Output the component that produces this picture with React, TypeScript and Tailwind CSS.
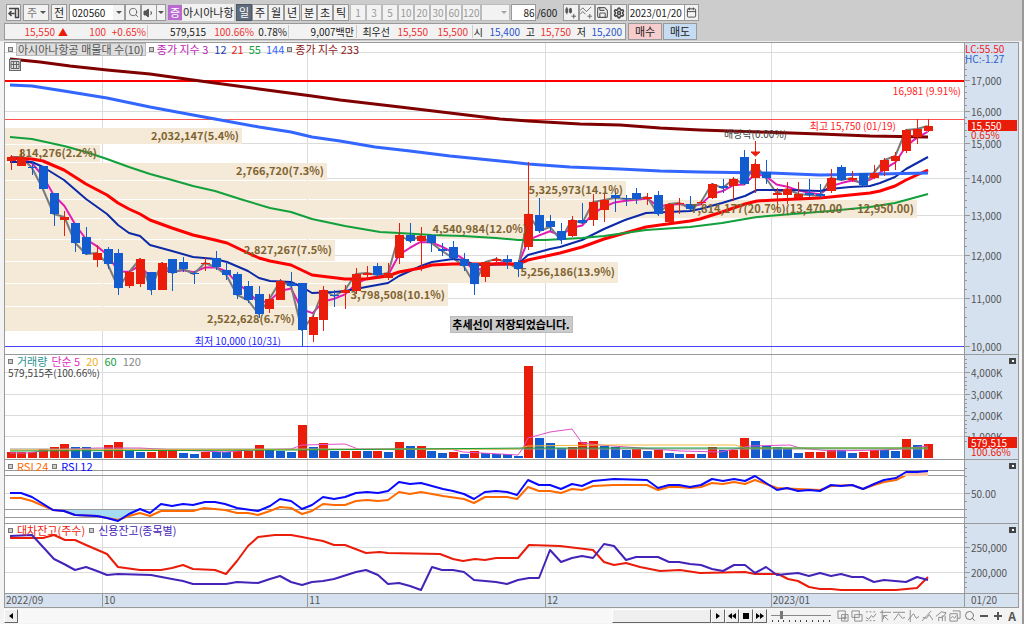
import { useState } from "react";
import type { ReactNode } from "react";
import {
  Calendar,
  Save,
  Search,
  Settings,
  Volume1,
} from "lucide-react";

/**
 * Weekly stock chart: quote toolbar, price candles with moving averages and a
 * volume profile, then volume, RSI and balance panels above a date axis.
 */

const UP = "#ea1c0a";
const DOWN = "#125cd0";
const PLOT_LEFT = 5;
const PLOT_WIDTH = 959;
const MONTHS = [102.5, 307.5, 545.5, 771.5];

type Point = [number, number];

// high, body top, body bottom, low; falling candles are listed in FALLING
const CANDLES = [
  [155, 157, 161, 170], [149, 157, 166, 166], [162, 167, 168, 175], [166, 166, 189, 189],
  [193, 193, 214, 226], [211, 217, 220, 236], [223, 223, 243, 252], [227, 237, 254, 255],
  [245, 253, 260, 267], [247, 249, 264, 269], [249, 253, 288, 295], [271, 272, 286, 288],
  [258, 259, 284, 287], [272, 272, 290, 295], [262, 263, 290, 290], [259, 259, 273, 291],
  [257, 262, 269, 272], [271, 273, 274, 284], [258, 263, 264, 271], [251, 258, 267, 270],
  [262, 270, 275, 280], [272, 274, 295, 299], [281, 286, 300, 303], [286, 294, 314, 318],
  [294, 299, 309, 313], [279, 281, 300, 300], [272, 283, 286, 288], [283, 283, 330, 347],
  [315, 317, 335, 342], [286, 290, 320, 331], [290, 295, 296, 307], [285, 290, 293, 309],
  [268, 274, 291, 294], [266, 273, 275, 277], [263, 266, 275, 277], [263, 273, 278, 280],
  [223, 235, 258, 264], [223, 235, 241, 243], [227, 236, 241, 271], [235, 235, 243, 252],
  [243, 249, 251, 256], [241, 247, 258, 260], [253, 259, 266, 271], [263, 263, 284, 295],
  [262, 262, 277, 282], [257, 259, 261, 264], [255, 259, 262, 269], [260, 262, 269, 277],
  [162, 214, 247, 250], [198, 215, 231, 233], [215, 221, 227, 231], [223, 231, 240, 244],
  [216, 220, 236, 237], [203, 220, 223, 224], [194, 202, 220, 226], [194, 200, 210, 222],
  [190, 195, 198, 212], [195, 198, 199, 206], [188, 193, 199, 204], [193, 197, 199, 205],
  [191, 195, 214, 216], [203, 204, 222, 223], [198, 203, 204, 214], [196, 204, 209, 210],
  [200, 202, 203, 205], [183, 184, 198, 199], [179, 186, 188, 193], [177, 179, 186, 201],
  [150, 157, 184, 185], [159, 164, 178, 193], [160, 172, 178, 184], [188, 193, 195, 212],
  [182, 189, 195, 204], [182, 194, 198, 199], [179, 193, 195, 197], [184, 194, 196, 198],
  [169, 178, 191, 193], [165, 167, 180, 181], [171, 178, 180, 182], [173, 173, 185, 187],
  [165, 173, 178, 179], [158, 160, 171, 176], [152, 156, 161, 170], [129, 130, 151, 153],
  [119, 129, 137, 144], [119, 126, 131, 132],
];

const FALLING = new Set([
  2, 3, 4, 6, 7, 9, 10, 13, 15, 16, 17, 19, 20, 21, 22, 23, 26, 27, 30, 34, 37, 39, 40, 41,
  42, 43, 46, 47, 49, 50, 51, 53, 56, 57, 58, 60, 63, 66, 68, 70, 74, 75, 77, 79,
]);

// bar heights, negative where volume fell
const VOLUMES = [
  6, 6, 6, 9, 11, 14, -11, -11, -6, 13, 16, -7, -6, 6, 9, 9, -5, -4, 6, -6, -6, 7, 7, 13, -9,
  -7, -6, 33, -11, 15, -7, 7, 7, -7, 7, -6, 16, -12, 12, -7, -5, 6, -4, 7, -5, -4, -4, -2, 92,
  -20, -15, -10, 11, 16, 17, -12, -11, -8, 9, -7, 8, -5, -4, 4, -4, 11, -8, 8, 20, -17, -12,
  -11, -10, -5, 6, 6, 8, -8, -5, 6, 8, -8, -7, 19, -13, 14,
];

const EMA12: Point[] = [[10, 162], [32, 162], [43, 167], [64, 180], [86, 199], [107, 214], [118, 225], [129, 233], [140, 236], [150, 245], [172, 251], [193, 257], [215, 259], [227, 262], [248, 271], [259, 278], [270, 281], [291, 282], [302, 287], [312, 293], [334, 292], [345, 291], [366, 287], [388, 283], [399, 276], [410, 271], [421, 266], [432, 262], [453, 259], [463, 260], [475, 265], [518, 264], [528, 255], [550, 249], [560, 247], [582, 240], [604, 229], [625, 220], [646, 213], [668, 212], [690, 211], [700, 209], [722, 203], [745, 196], [757, 190], [790, 190], [820, 191], [830, 189], [850, 187], [870, 186], [880, 183], [895, 177], [906, 169], [928, 157]];
const EMA21: Point[] = [[10, 158], [32, 159], [43, 161], [64, 170], [86, 184], [107, 195], [118, 203], [129, 209], [140, 214], [150, 220], [172, 228], [193, 235], [215, 240], [227, 243], [248, 253], [259, 258], [270, 261], [291, 265], [312, 275], [345, 279], [366, 279], [388, 276], [399, 272], [421, 268], [432, 265], [453, 264], [518, 264], [528, 260], [560, 253], [582, 247], [604, 239], [625, 233], [646, 227], [660, 225], [690, 221], [700, 219], [722, 212], [745, 204], [757, 201], [775, 200], [820, 198], [840, 196], [870, 193], [880, 191], [895, 186], [906, 180], [928, 170]];
const EMA55: Point[] = [[10, 137], [32, 139], [64, 146], [86, 152], [107, 159], [129, 167], [150, 174], [172, 180], [193, 186], [215, 191], [240, 199], [270, 208], [291, 212], [312, 219], [345, 226], [380, 232], [399, 233], [432, 235], [463, 236], [496, 238], [518, 240], [545, 240], [582, 238], [604, 236], [625, 233], [646, 230], [690, 227], [722, 223], [757, 217], [780, 215], [830, 211], [870, 207], [895, 203], [928, 194]];
const EMA144: Point[] = [[10, 85], [32, 86], [64, 91], [107, 98], [150, 107], [193, 115], [215, 119], [259, 127], [291, 132], [312, 137], [340, 141], [375, 147], [410, 151], [450, 156], [500, 161], [528, 164], [570, 167], [620, 169], [660, 171], [700, 172], [770, 173], [820, 175], [880, 174], [928, 173]];
const EMA233: Point[] = [[10, 59], [40, 62], [70, 66], [107, 70], [150, 74], [193, 80], [215, 83], [259, 89], [312, 96], [340, 100], [400, 107], [450, 113], [500, 119], [528, 121], [580, 124], [620, 125], [660, 128], [700, 130], [760, 132], [820, 134], [870, 136], [928, 137]];

const VOL5: Point[] = [[10, 453], [27, 453], [50, 450], [97, 448], [140, 448], [178, 450], [225, 452], [250, 450], [291, 449], [302, 445], [345, 444], [358, 449], [400, 449], [450, 449], [463, 452], [518, 455], [523, 448], [528, 438], [550, 432], [572, 429], [582, 443], [600, 445], [640, 448], [680, 451], [720, 452], [735, 449], [750, 446], [790, 445], [800, 448], [830, 451], [880, 450], [900, 449], [928, 446]];
const VOL20: Point[] = [[10, 450], [518, 449], [528, 446], [600, 445], [735, 445], [745, 448], [928, 448]];
const VOL60: Point[] = [[10, 451], [300, 450], [528, 448], [928, 448]];
const VOL120: Point[] = [[10, 449], [928, 449]];

const RSI12: Point[] = [[10, 493], [21, 493], [32, 497], [53, 510], [64, 511], [75, 515], [97, 516], [107, 518], [118, 521], [129, 514], [140, 509], [150, 513], [161, 504], [172, 506], [183, 504], [193, 505], [205, 502], [215, 502], [225, 504], [237, 508], [258, 511], [270, 506], [280, 499], [291, 501], [302, 509], [312, 505], [323, 497], [334, 499], [345, 497], [356, 493], [367, 492], [378, 493], [388, 491], [399, 482], [410, 484], [421, 483], [432, 486], [443, 489], [453, 491], [464, 494], [474, 499], [485, 492], [496, 491], [507, 492], [517, 495], [528, 480], [539, 485], [550, 485], [561, 489], [572, 484], [582, 486], [593, 481], [614, 479], [647, 480], [658, 488], [669, 485], [679, 485], [690, 487], [701, 485], [712, 479], [723, 481], [734, 479], [745, 481], [755, 476], [766, 483], [777, 490], [787, 488], [798, 491], [809, 490], [820, 491], [831, 485], [841, 486], [852, 485], [863, 489], [874, 484], [884, 480], [896, 478], [906, 472], [917, 472], [928, 471]];
const RSI24: Point[] = [[10, 498], [21, 498], [32, 501], [53, 510], [64, 511], [75, 515], [97, 516], [107, 518], [118, 520], [129, 516], [140, 513], [150, 516], [161, 511], [193, 511], [204, 508], [225, 510], [237, 513], [248, 513], [258, 515], [270, 511], [280, 507], [291, 508], [302, 514], [312, 511], [323, 504], [334, 505], [345, 505], [356, 501], [367, 500], [378, 501], [388, 500], [399, 492], [410, 494], [421, 492], [443, 496], [464, 499], [474, 503], [485, 497], [507, 497], [517, 499], [528, 487], [539, 491], [550, 491], [561, 493], [572, 489], [582, 490], [593, 486], [614, 485], [647, 485], [658, 490], [669, 487], [679, 487], [690, 488], [701, 487], [712, 483], [723, 484], [734, 482], [745, 484], [755, 480], [766, 484], [777, 488], [798, 489], [820, 490], [831, 486], [852, 485], [863, 489], [874, 485], [884, 482], [896, 480], [906, 475], [928, 475]];

const LENDING: Point[] = [[10, 538], [43, 538], [54, 535], [65, 540], [75, 540], [86, 545], [107, 554], [118, 567], [140, 570], [161, 570], [172, 568], [183, 565], [193, 569], [215, 570], [226, 574], [237, 561], [248, 546], [258, 537], [275, 535], [291, 535], [302, 537], [312, 539], [323, 541], [334, 545], [345, 545], [366, 553], [380, 552], [388, 553], [440, 554], [453, 559], [463, 561], [475, 559], [485, 560], [496, 558], [518, 558], [529, 545], [560, 546], [593, 550], [604, 562], [614, 565], [626, 563], [640, 567], [660, 571], [680, 570], [700, 573], [745, 572], [755, 574], [778, 574], [788, 579], [798, 581], [809, 587], [820, 589], [831, 589], [841, 590], [896, 590], [917, 588], [928, 577]];
const CREDIT: Point[] = [[10, 536], [32, 535], [43, 547], [54, 559], [64, 564], [75, 570], [86, 567], [97, 571], [107, 575], [118, 574], [151, 575], [172, 579], [183, 581], [193, 584], [226, 584], [237, 582], [258, 583], [270, 579], [280, 576], [291, 582], [302, 585], [312, 582], [323, 581], [334, 579], [356, 572], [366, 570], [378, 575], [388, 584], [399, 583], [410, 586], [421, 590], [432, 567], [442, 570], [453, 570], [464, 572], [474, 580], [496, 582], [507, 584], [518, 580], [529, 578], [539, 578], [550, 550], [561, 562], [572, 558], [582, 556], [593, 558], [604, 544], [614, 546], [626, 560], [636, 557], [658, 557], [669, 562], [679, 562], [690, 564], [701, 565], [712, 569], [723, 571], [734, 565], [745, 565], [755, 573], [766, 567], [777, 575], [787, 574], [798, 573], [809, 576], [820, 573], [831, 576], [841, 574], [852, 577], [863, 577], [874, 582], [884, 580], [906, 582], [917, 577], [928, 580]];

// volume profile: top, bottom, right edge, label
const PROFILE: [number, number, number, string][] = [
  [128, 144, 242, "2,032,147(5.4%)"],
  [145, 162, 100, "814,276(2.2%)"],
  [163, 180, 327, "2,766,720(7.3%)"],
  [181, 199, 626, "5,325,973(14.1%)"],
  [200, 218, 917, "7,814,177(20.7%)(13,470.00 — 12,950.00)"],
  [219, 239, 530, "4,540,984(12.0%)"],
  [240, 261, 335, "2,827,267(7.5%)"],
  [262, 283, 618, "5,256,186(13.9%)"],
  [284, 306, 448, "3,798,508(10.1%)"],
  [307, 331, 298, "2,522,628(6.7%)"],
];

const PERIODS = ["주", "월", "년"];
const UNITS = ["분", "초", "틱"];
const MINUTES = ["1", "3", "5", "10", "20", "30", "60", "120"];
const PRICES = [10000, 11000, 12000, 13000, 14000, 15000, 16000, 17000];

const candleX = (i: number) => 10.5 + i * 10.79;
const priceY = (p: number) => 346.5 - 500.4 * Math.log(p / 10000);
const pct = (x: number) => `${((x - PLOT_LEFT) / PLOT_WIDTH) * 100}%`;
const toPoints = (pts: Point[]) => pts.map((p) => p.join(",")).join(" ");

const closes: Point[] = CANDLES.map((c, i) => [candleX(i), FALLING.has(i) ? c[2] : c[1]]);

function ema3(): Point[] {
  let prev = 163;
  return closes.map(([x, y]) => {
    prev += (y - prev) / 2;
    return [x, prev];
  });
}

function Line({ pts, color, width }: { pts: Point[]; color: string; width: number }) {
  return (
    <polyline points={toPoints(pts)} fill="none" stroke={color} strokeWidth={width} strokeLinejoin="round" />
  );
}

function Plot({ top, height, rows, children }: { top: number; height: number; rows: number[]; children: ReactNode }) {
  return (
    <svg
      viewBox={`${PLOT_LEFT} ${top} ${PLOT_WIDTH} ${height}`}
      preserveAspectRatio="none"
      className="block h-full w-full"
      aria-hidden="true"
    >
      <g stroke="#dcdcdc" strokeWidth="1" shapeRendering="crispEdges">
        {rows.map((y) => (
          <line key={y} x1="5" x2="964" y1={y} y2={y} />
        ))}
        {MONTHS.map((x) => (
          <line key={x} x1={x} x2={x} y1={top} y2={top + height} />
        ))}
      </g>
      {children}
    </svg>
  );
}

function Axis({ top, height, ticks, labels, children }: {
  top: number;
  height: number;
  ticks: number[];
  labels: [number, string][];
  children?: ReactNode;
}) {
  return (
    <div className="relative w-[55px] shrink-0 overflow-hidden border-x border-[#9a9a9a] bg-[#d6e1ef] text-[10px] text-[#555]">
      <svg viewBox={`0 ${top} 53 ${height}`} className="block h-full w-full" shapeRendering="crispEdges" aria-hidden="true">
        {ticks.map((y) => (
          <line key={y} x1="0" x2="2" y1={y} y2={y} stroke="#999" />
        ))}
        {labels.map(([y]) => (
          <line key={y} x1="0" x2="5" y1={y} y2={y} stroke="#999" />
        ))}
      </svg>
      {labels.map(([y, text]) => (
        <span key={text} className="absolute left-[6px] -translate-y-1/2" style={{ top: Math.floor(y - top) }}>
          {text}
        </span>
      ))}
      {children}
    </div>
  );
}

function CloseBox() {
  return (
    <button aria-label="패널 닫기" className="absolute top-[3px] right-[2px] flex h-[6px] w-[7px] items-center justify-center bg-[#444]">
      <span className="size-[2px] bg-white" />
    </button>
  );
}

function Dot() {
  return <span className="size-[5px] shrink-0 border border-[#777] bg-[#ccc]" />;
}

function ToolButton({ children, label, size = "w-[16px]", tone = "border-[#999] bg-[#f2f2f2]" }: {
  children: ReactNode;
  label?: string;
  size?: string;
  tone?: string;
}) {
  return (
    <button aria-label={label} className={`flex h-[17px] shrink-0 items-center justify-center border ${size} ${tone}`}>
      {children}
    </button>
  );
}

function Caret() {
  return <span className="border-x-[3px] border-t-[3px] border-x-transparent border-t-[#555]" />;
}

function MainToolbar() {
  const [code, setCode] = useState("020560");
  const [count, setCount] = useState("86");
  return (
    <div className="flex h-[17px] items-center pl-[2px]">
      <ToolButton label="창 고정" size="w-[15px]">
        <svg viewBox="0 0 12 12" className="size-3" fill="none" stroke="#444" aria-hidden="true">
          <path d="M1 1.500h10M7.500 2v8.500h3V2M6.500 6.500H1M3.500 4L1 6.500 3.500 9" strokeWidth="1.5" />
        </svg>
      </ToolButton>
      <div className="relative ml-[2px] flex">
        <select aria-label="종목 구분" className="h-[17px] w-[26px] appearance-none border border-[#999] bg-[#f2f2f2] pl-[3px] text-[#777]">
          <option>주</option>
        </select>
        <span className="pointer-events-none absolute top-[7px] right-[3px] flex"><Caret /></span>
      </div>
      <span className="w-[2px]" />
      <ToolButton>전</ToolButton>
      <input
        aria-label="종목 코드"
        value={code}
        onChange={(e) => setCode(e.target.value)}
        className="ml-[2px] h-[17px] w-[44px] border border-r-0 border-[#999] bg-white pl-[2px] text-[10px]"
      />
      <ToolButton label="종목 목록" size="w-[12px] border-l-0"><Caret /></ToolButton>
      <ToolButton label="종목 검색"><Search size={11} color="#666" /></ToolButton>
      <ToolButton label="소리"><Volume1 size={12} color="#555" fill="#555" /></ToolButton>
      <ToolButton label="소리 설정" size="w-[9px] border-l-0"><Caret /></ToolButton>
      <span className="ml-[2px] flex h-[15px] w-[14px] items-center justify-center bg-[#b86ad0] text-white">증</span>
      <span className="h-[17px] w-[52px] bg-[#f2f2f2] pl-px leading-[17px] whitespace-nowrap">아시아나항</span>
      <span className="w-[2px]" />
      <ToolButton tone="border-[#4b5866] bg-[#5d6b7a] text-white">일</ToolButton>
      {PERIODS.map((p) => <ToolButton key={p}>{p}</ToolButton>)}
      <span className="w-px" />
      {UNITS.map((u) => <ToolButton key={u}>{u}</ToolButton>)}
      <span className="w-px" />
      {MINUTES.map((m) => (
        <ToolButton key={m} size="min-w-[16px] text-[10px]" tone="border-[#bbb] bg-[#f2f2f2] text-[#999]">{m}</ToolButton>
      ))}
      <div className="relative flex">
        <select aria-label="사용자 주기" className="h-[17px] w-[29px] appearance-none border border-[#bbb] bg-[#f2f2f2]">
          <option></option>
        </select>
        <span className="pointer-events-none absolute top-[7px] right-[3px] flex opacity-50"><Caret /></span>
      </div>
      <input
        aria-label="봉 개수"
        value={count}
        onChange={(e) => setCount(e.target.value)}
        className="ml-px h-[17px] w-[25px] border border-[#999] bg-white text-right text-[10px]"
      />
      <span className="w-[27px] pl-px text-[10px]">/600</span>
      <ToolButton label="종목 추가">
        <svg viewBox="0 0 14 14" className="size-[13px]" stroke="#555" fill="#555" aria-hidden="true">
          <path d="M3 1v8M7 2v6M8 11h5M10.500 8.500v5" fill="none" />
          <path d="M2 3h2v4H2zM6 3h2v4H6z" />
        </svg>
      </ToolButton>
      <ToolButton label="지표 추가">
        <svg viewBox="0 0 14 14" className="size-[13px]" stroke="#666" fill="none" aria-hidden="true">
          <path d="M0 5l3-3 4 4 5-5M0 9l3-3 3 3M8 11h5M10.500 8.500v5" />
        </svg>
      </ToolButton>
      <ToolButton label="저장"><Save size={13} color="#555" /></ToolButton>
      <ToolButton label="설정"><Settings size={12} color="#444" strokeWidth={3} /></ToolButton>
      <input aria-label="기준일" defaultValue="2023/01/20" className="ml-px h-[17px] w-[56px] border border-r-0 border-[#999] bg-white pl-px text-[10px]" />
      <ToolButton label="달력" size="w-[15px]"><Calendar size={11} color="#444" /></ToolButton>
    </div>
  );
}

function QuoteBar() {
  return (
    <div className="mt-[2px] flex h-[17px] items-stretch">
      <div className="flex items-center border border-[#999] bg-[#f2f2f2] text-right text-[10px] whitespace-nowrap text-[#222]">
        <span className="w-[50px] text-[#e33]">15,550</span>
        <span className="w-[13px] text-[#ea1c0a]">▲</span>
        <span className="w-[38px] text-[#e33]">100</span>
        <span className="w-[42px] border-r border-[#ccc] pr-px text-[#e33]">+0.65%</span>
        <span className="w-[58px]">579,515</span>
        <span className="w-[48px] text-[#e33]">100.66%</span>
        <span className="w-[35px] border-r border-[#ccc] pr-px">0.78%</span>
        <span className="w-[68px] border-r border-[#ccc] pr-[2px]">9,007백만</span>
        <span className="w-[33px]">최우선</span>
        <span className="w-[38px] text-[#e33]">15,550</span>
        <span className="w-[45px] border-r border-[#ccc] pr-1 text-[#e33]">15,500</span>
        <span className="w-[10px]">시</span>
        <span className="w-[37px] text-[#2a55cc]">15,400</span>
        <span className="w-[15px]">고</span>
        <span className="w-[36px] text-[#e33]">15,750</span>
        <span className="w-[15px]">저</span>
        <span className="w-[39px] pr-[3px] text-[#2a55cc]">15,200</span>
      </div>
      <span className="w-[2px]" />
      <ToolButton size="w-[34px]" tone="border-[#999] bg-[#f6cccc]">매수</ToolButton>
      <span className="w-px" />
      <ToolButton size="w-[34px]" tone="border-[#999] bg-[#c5dcf2]">매도</ToolButton>
    </div>
  );
}

function PricePanel() {
  const minor: number[] = [];
  for (let p = 10200; p < 18000; p += 200) if (p % 1000) minor.push(priceY(p));
  return (
    <section className="flex h-[312px] border-t border-[#999]">
      <div className="relative min-w-0 flex-1 border-l border-[#999]">
        <Plot top={43} height={311} rows={[...PRICES, 18000].map((p) => Math.floor(priceY(p)) + 0.5)}>
          <g fill="#f5e9d7">
            {PROFILE.map(([t, b, right]) => (
              <rect key={t} x="5" y={t} width={right - 5} height={b - t} />
            ))}
          </g>
          <g fill="none">
            <path d="M5 81h959" stroke="#ff0000" strokeWidth="2" />
            <path d="M5 119.500h959" stroke="#ff5050" />
            <path d="M5 346.500h959" stroke="#4444ff" />
          </g>
          <Line pts={ema3()} color="#e01cb4" width={2} />
          <Line pts={closes} color="#7a7a7a" width={2} />
          <Line pts={EMA12} color="#0c2aa8" width={2} />
          <Line pts={EMA21} color="#ff0000" width={3} />
          <Line pts={EMA55} color="#12a03c" width={2} />
          <Line pts={EMA144} color="#3366ff" width={3} />
          <Line pts={EMA233} color="#800000" width={3} />
          <g shapeRendering="crispEdges">
            {CANDLES.map(([high, top, bottom, low], i) => {
              const color = FALLING.has(i) ? DOWN : UP;
              const x = Math.round(candleX(i));
              return (
                <g key={i} fill={color}>
                  <rect x={x} y={high} width="1" height={low - high} />
                  <rect x={x - 4} y={top} width="9" height={Math.max(1, bottom - top)} />
                </g>
              );
            })}
          </g>
          <path d="M755.500 141v11M751 152h9l-4.500 4z" stroke={UP} fill={UP} />
        </Plot>

        {PROFILE.map(([t, b, right, text]) => (
          <span
            key={text}
            className="absolute -translate-x-full -translate-y-1/2 pr-[3px] font-bold whitespace-nowrap text-[#7f6430]"
            style={{ left: pct(right), top: Math.floor((t + b) / 2) - 44 }}
          >
            {text}
          </span>
        ))}
        <div className="text-[10px] whitespace-nowrap">
          <span className="absolute top-[47px] right-[3px] -translate-y-1/2 text-[#ff2020]">16,981 (9.91%)</span>
          <span className="absolute top-[82px] -translate-x-full -translate-y-1/2 text-[#ff2020]" style={{ left: pct(896) }}>
            최고 15,750 (01/19)
          </span>
          <span className="absolute top-[90px] -translate-x-full -translate-y-1/2 text-[#444]" style={{ left: pct(787) }}>
            배당락(0.00%)
          </span>
          <span className="absolute top-[297px] -translate-x-full -translate-y-1/2 text-[#2222ff]" style={{ left: pct(281) }}>
            최저 10,000 (10/31)
          </span>
        </div>
        <p className="absolute top-[273px] left-1/2 flex h-[17px] w-[123px] -translate-x-[35px] items-center justify-center border border-[#bbb] bg-[#cbcbcb] font-bold whitespace-nowrap text-black">
          추세선이 저장되었습니다.
        </p>

        <div className="absolute top-0 left-[3px] flex h-[13px] items-center gap-[3px] whitespace-nowrap text-[#c01cb4]">
          <Dot />
          <button className="h-[13px] border border-[#bbb] bg-[#dedede] px-px leading-[11px] text-[#555]">
            아시아나항공 매물대 수(10)
          </button>
          <Dot />
          <span>종가 지수 3</span>
          <span className="ml-[3px] text-[#2238b8]">12</span>
          <span className="ml-[2px] text-[#f02020]">21</span>
          <span className="ml-[2px] text-[#12a03c]">55</span>
          <span className="ml-[2px] text-[#3366ff]">144</span>
          <Dot />
          <span className="text-[#8c1414]">종가 지수 233</span>
        </div>
        <button aria-label="표 보기" className="absolute top-[16px] left-[4px] border border-[#666] bg-[#ddd]">
          <svg viewBox="0 0 10 10" className="size-[10px]" fill="none" stroke="#666" aria-hidden="true">
            <path d="M1 1.500h8v7H1zM1 4.500h8M3.500 1v8M6.500 1v8" />
          </svg>
        </button>
      </div>
      <Axis
        top={43}
        height={311}
        ticks={minor}
        labels={PRICES.map((p) => [Math.floor(priceY(p)) + 0.5, p.toLocaleString("en-US")])}
      >
        <span className="absolute top-px left-0 leading-[10px] text-[#f02020]">LC:55.50</span>
        <span className="absolute top-[11px] left-0 leading-[10px] text-[#2a62cc]">HC:-1.27</span>
        <span className="absolute top-[77px] right-px left-[3px] h-[11px] bg-[#ea1c0a] pl-[3px] leading-[11px] text-white">15,550</span>
        <span className="absolute top-[87px] left-[6px] leading-[10px] text-[#ea1c0a]">0.65%</span>
      </Axis>
    </section>
  );
}

function VolumePanel() {
  return (
    <section className="flex h-[105px] border-t border-[#999]">
      <div className="relative min-w-0 flex-1 border-l border-[#999]">
        <Plot top={355} height={104} rows={[372.5, 394.5, 415.5, 436.5]}>
          <g shapeRendering="crispEdges">
            {VOLUMES.map((v, i) => (
              <rect
                key={i}
                x={Math.round(candleX(i)) - 4}
                y={458 - Math.abs(v)}
                width="9"
                height={Math.abs(v)}
                fill={v < 0 ? DOWN : UP}
              />
            ))}
          </g>
          <Line pts={VOL5} color="#e050c8" width={1} />
          <Line pts={VOL120} color="#999" width={1} />
          <Line pts={VOL20} color="#f0b838" width={1} />
          <Line pts={VOL60} color="#12a03c" width={1} />
        </Plot>
        <div className="absolute top-0 left-[3px] flex h-[13px] items-center gap-1 text-[#e030c0]">
          <Dot />
          <span className="text-[#2a9090]">거래량</span>
          <span>단순 5</span>
          <span className="ml-[2px] text-[#f0b020]">20</span>
          <span className="ml-[2px] text-[#12a03c]">60</span>
          <span className="ml-[2px] text-[#888]">120</span>
        </div>
        <span className="absolute top-[11px] left-[3px] text-[10px] text-[#444]">579,515주(100.66%)</span>
      </div>
      <Axis
        top={355}
        height={104}
        ticks={[359.5, 363.5, 367.5, 377.5, 381.5, 385.5, 389.5, 399.5, 403.5, 407.5, 411.5, 420.5, 424.5, 428.5, 432.5, 441.5]}
        labels={[[372.5, "4,000K"], [394.5, "3,000K"], [415.5, "2,000K"], [436.5, "1,000K"]]}
      >
        <span className="absolute top-[82px] right-px left-[3px] h-[11px] bg-[#ea1c0a] pl-[3px] leading-[11px] text-white">579,515</span>
        <span className="absolute top-[92px] left-[6px] leading-[10px] text-[#ea1c0a]">100.66%</span>
        <CloseBox />
      </Axis>
    </section>
  );
}

function RsiPanel() {
  return (
    <section className="flex h-[64px] border-t border-[#999]">
      <div className="relative min-w-0 flex-1 border-l border-[#999]">
        <Plot top={460} height={63} rows={[493.5]}>
          <path d="M5 470.500h959M5 475.500h959M5 509.500h959M5 517.500h959" stroke="#999" shapeRendering="crispEdges" />
          <path d="M53 510H139L129 514 118 521 107 518 97 516 75 515 64 511z" fill="#a5dcf2" />
          <Line pts={RSI24} color="#ff6a00" width={2} />
          <path d="M902 476l4-4h22v4z" fill="#f8c8a8" />
          <Line pts={RSI12} color="#0a0aff" width={2} />
        </Plot>
        <div className="absolute top-0 left-[3px] flex h-[13px] items-center gap-1">
          <Dot />
          <span className="text-[#ff6a00]">RSI 24</span>
          <Dot />
          <span className="text-[#0a0aff]">RSI 12</span>
        </div>
      </div>
      <Axis top={460} height={63} ticks={[468.5, 476.5, 484.5, 501.5, 509.5, 517.5]} labels={[[493.5, "50.00"]]}>
        <CloseBox />
      </Axis>
    </section>
  );
}

function BalancePanel() {
  return (
    <section className="flex h-[70px] border-t border-[#999]">
      <div className="relative min-w-0 flex-1 border-l border-[#999]">
        <Plot top={524} height={69} rows={[547.5, 572.5]}>
          <Line pts={LENDING} color="#ea1c0a" width={2} />
          <Line pts={CREDIT} color="#4424b8" width={2} />
        </Plot>
        <div className="absolute top-0 left-[3px] flex h-[13px] items-center gap-1">
          <Dot />
          <span className="text-[#ea1c0a]">대차잔고(주수)</span>
          <Dot />
          <span className="text-[#4424b8]">신용잔고(종목별)</span>
        </div>
      </div>
      <Axis
        top={524}
        height={69}
        ticks={[527.5, 532.5, 537.5, 542.5, 552.5, 557.5, 562.5, 567.5, 577.5, 582.5, 587.5]}
        labels={[[547.5, "250,000"], [572.5, "200,000"]]}
      >
        <CloseBox />
      </Axis>
    </section>
  );
}

const DATES: [number, string][] = [
  [97, "2022/09"],
  [205, "10"],
  [238, "11"],
  [226, "12"],
  [193, "2023/01"],
];

function DateAxis() {
  return (
    <div className="flex h-[15px] border-y border-[#999] bg-[#d6e1ef] text-[10px] leading-[12px] text-[#555]">
      <div className="flex min-w-0 flex-1">
        {DATES.map(([span, text]) => (
          <span key={text} className="basis-0 border-l border-[#999] pl-px" style={{ flexGrow: span }}>
            {text}
          </span>
        ))}
      </div>
      <span className="w-[55px] border-x border-[#999] pl-[6px]">01/20</span>
    </div>
  );
}

const DRAW_TOOLS = [
  { label: "창 추가", d: "M1 1h8v8H1zM5 5h7v7H5zM8.500 6v5M6 8.500h5" },
  { label: "창 겹치기", d: "M1 1h8v7H1zM4 5h8v7H4z" },
  { label: "영역", d: "M1 2h2M5 2h2M9 2h2M1 8l3 2 3-4 2 2 3-4M1 11.500h2M5 11.500h2M9 11.500h2" },
  { label: "십자선", d: "M3.500 0v13M1 2.500h12M5 6l5 5M5 6v4M5 6h4" },
  { label: "수평선", d: "M0 2.500h13M1 11l5-7 4 5 3-1" },
  { label: "수직선", d: "M3.500 0v13M1 11l6-7 3 5 3-2" },
  { label: "추세선", d: "M1 12L11 1M2 8l4 1 3-4 4 6" },
  { label: "지우개", d: "M1 7l6-5 5 1-4 5H4v4M8 6v6M11 6v6" },
  { label: "전체 지우기", d: "M4 1h8v8h-3M1 4h8v8H1zM2 9l2-2 2 2 2-3" },
];

const ARROW = "flex h-[14px] w-[14px] items-center justify-center border border-t-white border-r-[#666] border-b-[#666] border-l-white bg-[#efefef]";

function BottomBar() {
  const [zoom, setZoom] = useState(15);
  return (
    <footer className="flex h-[16px] items-center">
      <button aria-label="왼쪽으로" className={ARROW}>
        <svg viewBox="0 0 8 8" className="size-2" aria-hidden="true"><path d="M6 1v6L2 4z" /></svg>
      </button>
      <div className="flex h-[14px] flex-1 justify-end bg-[#f8f8f8]">
        <div className="h-[14px] w-1/7 border border-t-white border-r-[#666] border-b-[#666] border-l-white bg-[#efefef]" />
      </div>
      <button aria-label="오른쪽으로" className={ARROW}>
        <svg viewBox="0 0 8 8" className="size-2" aria-hidden="true"><path d="M2 1v6l4-3z" /></svg>
      </button>
      <button aria-label="뒤로" className={ARROW}>
        <svg viewBox="0 0 8 8" className="size-2" aria-hidden="true"><path d="M4 1v6L0 4zM8 1v6L4 4z" /></svg>
      </button>
      <button aria-label="정지" className={ARROW}>
        <svg viewBox="0 0 8 8" className="size-2" aria-hidden="true"><path d="M1 1h6v6H1z" /></svg>
      </button>
      <button aria-label="앞으로" className={ARROW}>
        <svg viewBox="0 0 8 8" className="size-2" aria-hidden="true"><path d="M0 1v6l4-3zM4 1v6l4-3z" /></svg>
      </button>
      <div className="ml-1 flex w-[60px] flex-col">
        <input
          type="range"
          aria-label="확대 비율"
          value={zoom}
          onChange={(e) => setZoom(Number(e.target.value))}
          className="h-[9px] w-full appearance-none bg-[linear-gradient(#888,#888)] bg-[length:100%_1px] bg-center bg-no-repeat [&::-webkit-slider-thumb]:h-[8px] [&::-webkit-slider-thumb]:w-[3px] [&::-webkit-slider-thumb]:appearance-none [&::-webkit-slider-thumb]:bg-[#777]"
        />
        <div className="flex justify-between px-px">
          {Array.from({ length: 11 }, (_, i) => <span key={i} className="h-[2px] w-px bg-[#444]" />)}
        </div>
      </div>
      <div className="ml-[5px] flex">
        {DRAW_TOOLS.map((t) => (
          <button key={t.label} aria-label={t.label} className="flex w-[14px] justify-center">
            <svg viewBox="0 0 13 13" className="size-3" fill="none" stroke="#888" aria-hidden="true"><path d={t.d} /></svg>
          </button>
        ))}
        <button aria-label="돋보기" className="flex w-[15px] justify-center"><Search size={12} color="#777" /></button>
        <button aria-label="축소" className="flex w-[14px] items-center justify-center"><span className="h-[2px] w-2 bg-[#555]" /></button>
        <button aria-label="확대" className="flex w-[14px] items-center justify-center">
          <svg viewBox="0 0 8 8" className="size-2" stroke="#555" strokeWidth="2" aria-hidden="true"><path d="M4 0v8M0 4h8" /></svg>
        </button>
        <button className="w-[14px] text-[12px] leading-[12px] font-bold text-[#555]">A</button>
      </div>
    </footer>
  );
}

export default function App() {
  return (
    <div className="min-h-screen border-r-2 border-[#999] bg-[#f3f3f3] font-['Noto_Sans_CJK_KR',sans-serif] text-[11px] leading-[13px] text-[#222]">
      <header className="border-b border-[#eee] bg-[#ccc] pt-1 pb-px pl-1">
        <MainToolbar />
        <QuoteBar />
      </header>
      <main className="pr-[3px] pl-1">
        <div className="bg-white">
          <PricePanel />
          <VolumePanel />
          <RsiPanel />
          <BalancePanel />
        </div>
        <DateAxis />
        <BottomBar />
      </main>
    </div>
  );
}
